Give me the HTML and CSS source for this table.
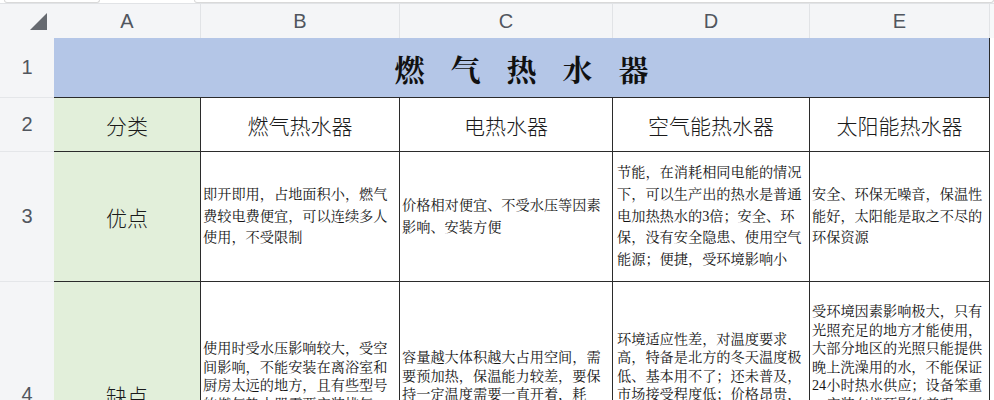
FILE: index.html
```html
<!DOCTYPE html>
<html lang="zh-CN">
<head>
<meta charset="utf-8">
<title>燃气热水器</title>
<link rel="stylesheet" href="styles.css">
</head>
<body>
<div class="tabs">
  <div class="tab tab-first"></div>
  <div class="tab-gap"></div>
  <div class="tab tab-second"></div>
</div>
<div class="sheet">
  <div class="ch corner"><span class="tri"></span></div>
  <div class="ch">A</div>
  <div class="ch">B</div>
  <div class="ch">C</div>
  <div class="ch">D</div>
  <div class="ch">E</div>
  <div class="ch ch-end"></div>

  <div class="rh">1</div>
  <div class="title">燃气热水器</div>
  <div class="out"></div>

  <div class="rh">2</div>
  <div class="cat">分类</div>
  <div class="head">燃气热水器</div>
  <div class="head">电热水器</div>
  <div class="head">空气能热水器</div>
  <div class="head">太阳能热水器</div>
  <div class="out"></div>

  <div class="rh">3</div>
  <div class="cat">优点</div>
  <div class="txt">即开即用，占地面积小，燃气<br>费较电费便宜，可以连续多人<br>使用，不受限制</div>
  <div class="txt">价格相对便宜、不受水压等因素<br>影响、安装方便</div>
  <div class="txt txt-d">节能，在消耗相同电能的情况<br>下，可以生产出的热水是普通<br>电加热热水的3倍；安全、环<br>保，没有安全隐患、使用空气<br>能源；便捷，受环境影响小</div>
  <div class="txt">安全、环保无噪音，保温性<br>能好，太阳能是取之不尽的<br>环保资源</div>
  <div class="out"></div>

  <div class="rh">4</div>
  <div class="cat">缺点</div>
  <div class="txt tight">使用时受水压影响较大，受空<br>间影响，不能安装在离浴室和<br>厨房太远的地方，且有些型号<br>的燃气热水器需要安装排气<br>管道，存在一氧化碳中毒等<br>安全隐患</div>
  <div class="txt tight">容量越大体积越大占用空间，需<br>要预加热，保温能力较差，要保<br>持一定温度需要一直开着，耗<br>电量较大；使用寿命较短，需<br>定期清理水垢</div>
  <div class="txt txt-d tight">环境适应性差，对温度要求<br>高，特备是北方的冬天温度极<br>低、基本用不了；还未普及，<br>市场接受程度低；价格昂贵，<br>安装复杂，占用空间较大，<br>需要较大的安装位置，维修<br>成本较高</div>
  <div class="txt tight">受环境因素影响极大，只有<br>光照充足的地方才能使用，<br>大部分地区的光照只能提供<br>晚上洗澡用的水，不能保证<br>24小时热水供应；设备笨重<br>，安装在楼顶影响美观，<br>管道长热损失大，冬季易<br>冻裂，需要定期清洗维护，<br>使用寿命受天气影响，<br>阴雨天需辅助加热</div>
  <div class="out"></div>
</div>
</body>
</html>
```

FILE: styles.css
```css
* { box-sizing: border-box; }

html, body {
  margin: 0;
  padding: 0;
  background: #ffffff;
  overflow: hidden;
}

body {
  width: 994px;
  height: 400px;
  font-family: "Liberation Sans", "Noto Sans CJK SC", sans-serif;
  color: #222;
}

.tabs {
  display: flex;
  height: 3px;
  background: #ffffff;
}

.tab {
  height: 3px;
  border: 1px solid #d9d9d9;
  border-top: none;
  border-radius: 0 0 5px 5px;
  background: #ffffff;
}

.tab-first { width: 96px; margin-left: 4px; }
.tab-gap { width: 94px; }
.tab-second { flex: 1; }

.sheet {
  display: grid;
  grid-template-columns: 54px 147px 199px 213px 197px 180px 1fr;
  grid-template-rows: 35px 60px 54px 130px 226px;
}

.ch {
  background: #f4f5f7;
  border-top: 1px solid #e1e3e6;
  border-right: 1px solid #e1e3e6;
  display: flex;
  align-items: center;
  justify-content: center;
  font-size: 20px;
  color: #51565e;
  padding-top: 1px;
}

.ch-end { background: #f7f8f9; border-right: none; }

.corner {
  justify-content: flex-end;
  align-items: flex-end;
  padding: 0 7px 8px 0;
  border-right: none;
}

.tri {
  display: block;
  width: 0;
  height: 0;
  border-left: 17px solid transparent;
  border-bottom: 17px solid #666a70;
}

.rh {
  background: #f4f5f7;
  border-bottom: 1px solid #e4e6e9;
  display: flex;
  align-items: center;
  justify-content: center;
  font-size: 20px;
  color: #51565e;
}

.title {
  grid-column: 2 / 7;
  background: #b4c6e7;
  border-right: 1px solid #2b2b2b;
  border-bottom: 1px solid #2b2b2b;
  display: flex;
  align-items: center;
  justify-content: center;
  font-family: "Noto Serif CJK SC", "Noto Sans CJK SC", serif;
  font-weight: 700;
  font-size: 30px;
  letter-spacing: 26px;
  padding-left: 26px;
  color: #111;
}

.out { background: #ffffff; }

.cat {
  background: #e2efda;
  border-right: 1px solid #2b2b2b;
  border-bottom: 1px solid #2b2b2b;
  display: flex;
  align-items: center;
  justify-content: center;
  font-family: "Noto Sans CJK SC", sans-serif;
  font-weight: 300;
  font-size: 21px;
  color: #1a1a1a;
}

.head {
  background: #ffffff;
  border-right: 1px solid #2b2b2b;
  border-bottom: 1px solid #2b2b2b;
  display: flex;
  align-items: center;
  justify-content: center;
  font-family: "Noto Sans CJK SC", sans-serif;
  font-weight: 300;
  font-size: 21px;
  color: #1a1a1a;
}

.txt {
  background: #ffffff;
  border-right: 1px solid #2b2b2b;
  border-bottom: 1px solid #2b2b2b;
  display: flex;
  align-items: center;
  padding: 0 0 0 2px;
  font-family: "Liberation Serif", "Noto Serif CJK SC", "Noto Sans CJK SC", serif;
  font-size: 14.2px;
  line-height: 21.8px;
  color: #151515;
  white-space: nowrap;
  overflow: hidden;
}

.txt-d { padding-left: 4px; }

.tight { line-height: 18.4px; }
```
